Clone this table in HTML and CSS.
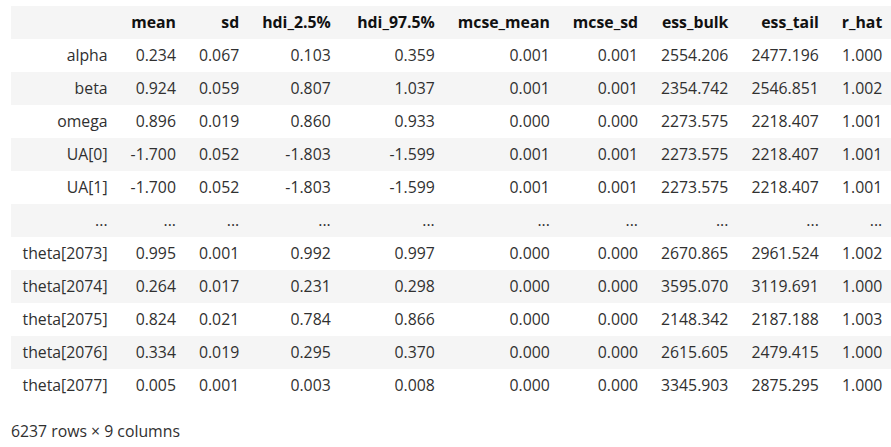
FILE: index.html
```html
<!DOCTYPE html>
<html>
<head>
<meta charset="utf-8">
<link rel="stylesheet" href="styles.css">
</head>
<body>
<div class="output">
<table class="dataframe">
<thead>
<tr><th></th><th>mean</th><th>sd</th><th>hdi_2.5%</th><th>hdi_97.5%</th><th>mcse_mean</th><th>mcse_sd</th><th>ess_bulk</th><th>ess_tail</th><th>r_hat</th></tr>
</thead>
<tbody>
<tr><th>alpha</th><td>0.234</td><td>0.067</td><td>0.103</td><td>0.359</td><td>0.001</td><td>0.001</td><td>2554.206</td><td>2477.196</td><td>1.000</td></tr>
<tr><th>beta</th><td>0.924</td><td>0.059</td><td>0.807</td><td>1.037</td><td>0.001</td><td>0.001</td><td>2354.742</td><td>2546.851</td><td>1.002</td></tr>
<tr><th>omega</th><td>0.896</td><td>0.019</td><td>0.860</td><td>0.933</td><td>0.000</td><td>0.000</td><td>2273.575</td><td>2218.407</td><td>1.001</td></tr>
<tr><th>UA[0]</th><td>-1.700</td><td>0.052</td><td>-1.803</td><td>-1.599</td><td>0.001</td><td>0.001</td><td>2273.575</td><td>2218.407</td><td>1.001</td></tr>
<tr><th>UA[1]</th><td>-1.700</td><td>0.052</td><td>-1.803</td><td>-1.599</td><td>0.001</td><td>0.001</td><td>2273.575</td><td>2218.407</td><td>1.001</td></tr>
<tr><th>...</th><td>...</td><td>...</td><td>...</td><td>...</td><td>...</td><td>...</td><td>...</td><td>...</td><td>...</td></tr>
<tr><th>theta[2073]</th><td>0.995</td><td>0.001</td><td>0.992</td><td>0.997</td><td>0.000</td><td>0.000</td><td>2670.865</td><td>2961.524</td><td>1.002</td></tr>
<tr><th>theta[2074]</th><td>0.264</td><td>0.017</td><td>0.231</td><td>0.298</td><td>0.000</td><td>0.000</td><td>3595.070</td><td>3119.691</td><td>1.000</td></tr>
<tr><th>theta[2075]</th><td>0.824</td><td>0.021</td><td>0.784</td><td>0.866</td><td>0.000</td><td>0.000</td><td>2148.342</td><td>2187.188</td><td>1.003</td></tr>
<tr><th>theta[2076]</th><td>0.334</td><td>0.019</td><td>0.295</td><td>0.370</td><td>0.000</td><td>0.000</td><td>2615.605</td><td>2479.415</td><td>1.000</td></tr>
<tr><th>theta[2077]</th><td>0.005</td><td>0.001</td><td>0.003</td><td>0.008</td><td>0.000</td><td>0.000</td><td>3345.903</td><td>2875.295</td><td>1.000</td></tr>
</tbody>
</table>
<p class="shape">6237 rows × 9 columns</p>
</div>
</body>
</html>
```
FILE: styles.css
```css
html, body {
  margin: 0;
  padding: 0;
  background: #ffffff;
}
body {
  font-family: "Open Sans", "Noto Sans", sans-serif;
  font-size: 15.8px;
  color: #303030;
}
.output {
  padding: 6px 0 0 11px;
}
.dataframe {
  border-collapse: collapse;
  border-spacing: 0;
}
.dataframe th,
.dataframe td {
  text-align: right;
  vertical-align: middle;
  padding: 6px 11.5px;
  line-height: 21px;
  white-space: nowrap;
  font-weight: normal;
}
.dataframe thead th {
  font-weight: bold;
  color: #111111;
}
.dataframe thead th:nth-child(5) {
  padding-left: 15px;
}
.dataframe thead tr {
  background: #f5f5f5;
}
.dataframe tbody tr:nth-child(even) {
  background: #f5f5f5;
}
.shape {
  margin: 19px 0 0 0;
  line-height: 21px;
}
```
